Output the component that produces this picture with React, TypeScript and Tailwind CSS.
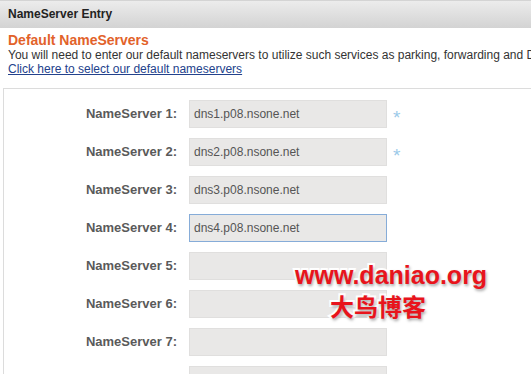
const servers = [
  'dns1.p08.nsone.net',
  'dns2.p08.nsone.net',
  'dns3.p08.nsone.net',
  'dns4.p08.nsone.net',
  '',
  '',
  '',
  '',
]

export default function App() {
  return (
    <div className="relative w-[531px] h-[374px] overflow-hidden bg-white font-['Liberation_Sans',Arial,sans-serif]">
      {/* Header bar */}
      <div className="h-[28px] border-t border-[#d4d4d4] bg-gradient-to-b from-[#ececec] to-[#d3d3d3] pl-[8px] text-[12px] font-bold leading-[27px] text-[#222]">
        NameServer Entry
      </div>

      {/* Intro */}
      <div className="px-[8px] pt-[4px]">
        <h3 className="text-[14px] font-bold leading-[16px] text-[#e2622a]">Default NameServers</h3>
        <p className="whitespace-nowrap text-[12px] leading-[14px] text-[#333]">
          You will need to enter our default nameservers to utilize such services as parking, forwarding and DNS management.
        </p>
        <a href="#" className="block w-fit text-[12px] leading-[14px] text-[#23428c] underline">
          Click here to select our default nameservers
        </a>
      </div>

      {/* Entry panel */}
      <div className="ml-[3px] mt-[12px] border-l border-t border-[#dcdcdc] pt-[11px]">
        <div className="flex flex-col gap-[10px]">
          {servers.map((value, i) => (
            <div key={i} className="flex h-[28px] items-center">
              <label className="w-[173px] text-right text-[13px] font-bold text-[#5a5a5a]">NameServer {i + 1}:</label>
              <div
                className={
                  i === 3
                    ? 'ml-[12px] h-[28px] w-[198px] border border-[#86acd8] bg-[#e9e8e7] pl-[4px] text-[12px] leading-[26px] text-[#555]'
                    : 'ml-[12px] h-[28px] w-[198px] border border-[#e0dfde] bg-[#e9e8e7] pl-[4px] text-[12px] leading-[26px] text-[#555]'
                }
              >
                {value}
              </div>
              {i < 2 && <span className="ml-[6px] mt-[6px] text-[19px] leading-none text-[#9ccae9]">*</span>}
            </div>
          ))}
        </div>
      </div>

      {/* Watermark */}
      <div className="absolute left-[295px] top-[259px] flex flex-col items-start text-[#e8141c] [paint-order:stroke_fill] [-webkit-text-stroke:4px_white] [text-shadow:1px_2px_3px_rgba(0,0,0,0.35)]">
        <span className="text-[25px] font-bold leading-[32px] font-['Liberation_Sans',Arial,sans-serif]">www.daniao.org</span>
        <span className="ml-[35px] mt-0 text-[24px] font-bold leading-[30px] font-['Noto_Sans_CJK_SC',sans-serif]">大鸟博客</span>
      </div>
    </div>
  )
}
